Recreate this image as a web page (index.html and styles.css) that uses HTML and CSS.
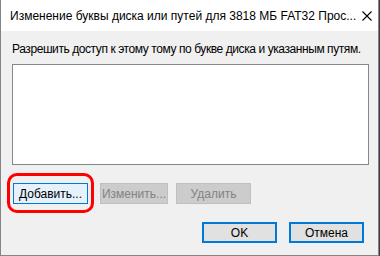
FILE: index.html
```html
<!DOCTYPE html>
<html lang="ru">
<head>
  <meta charset="UTF-8">
  <title>Изменение буквы диска</title>
  <link rel="stylesheet" href="styles.css">
</head>
<body>
  <div class="window">
    <div class="titlebar">
      <span class="title">Изменение буквы диска или путей для 3818 МБ FAT32 Проc...</span>
      <span class="close">
        <svg width="10" height="10" viewBox="0 0 10 10"><path d="M0.5 0.5 L9.5 9.5 M9.5 0.5 L0.5 9.5" stroke="#000" stroke-width="1.1"/></svg>
      </span>
    </div>
    <div class="content">
      <div class="label">Разрешить доступ к этому тому по букве диска и указанным путям.</div>
      <div class="listbox"></div>
      <div class="actions">
        <span class="highlight"><button class="btn btn-hover">Добавить...</button></span>
        <button class="btn btn-edit" disabled>Изменить...</button>
        <button class="btn" disabled>Удалить</button>
      </div>
      <div class="footer">
        <button class="btn btn-default">OK</button>
        <button class="btn btn-default">Отмена</button>
      </div>
    </div>
  </div>
</body>
</html>
```

FILE: styles.css
```css
body {
  margin: 0;
  background-color: #3a3a4a;
  font-family: "Liberation Sans", Arial, sans-serif;
  font-size: 12px;
  color: #000;
}
.window {
  width: 377px;
  height: 255px;
  background-color: #f0f0f0;
  border: 1px solid #858585;
  border-top: none;
}
.titlebar {
  height: 31px;
  background-color: #fff;
  display: flex;
  align-items: center;
  justify-content: space-between;
  padding-left: 9px;
}
.title {
  line-height: 16px;
  white-space: nowrap;
}
.close {
  width: 46px;
  height: 31px;
  display: flex;
  align-items: center;
  justify-content: center;
}
.content {
  padding: 10px 9px 0 11px;
}
.label {
  line-height: 16px;
  white-space: nowrap;
  letter-spacing: -0.42px;
}
.listbox {
  margin-top: 7px;
  height: 99px;
  background-color: #fff;
  border: 1px solid #828790;
}
.actions {
  display: flex;
  margin-top: 18px;
  padding-left: 1px;
}
.btn {
  font-family: inherit;
  font-size: 12px;
  height: 21px;
  width: 75px;
  padding: 0;
  background-color: #e1e1e1;
  border: 1px solid #adadad;
  color: #000;
  line-height: 18px;
}
.btn:disabled {
  background-color: #cccccc;
  border-color: #bfbfbf;
  color: #838383;
}
.btn-hover {
  background-color: #e5f1fb;
  border-color: #0078d7;
}
.btn-edit {
  width: 68px;
  margin-left: 12px;
  margin-right: 8px;
}
.highlight {
  position: relative;
  display: inline-flex;
}
.highlight::after {
  content: "";
  position: absolute;
  top: -10px;
  bottom: -9px;
  left: -6px;
  right: -6px;
  border: 3px solid #f00;
  border-radius: 10px;
}
.footer {
  display: flex;
  justify-content: flex-end;
  gap: 12px;
  margin-top: 18px;
  padding-right: 5px;
}
.btn-default {
  border: 2px solid #0078d7;
}
```
